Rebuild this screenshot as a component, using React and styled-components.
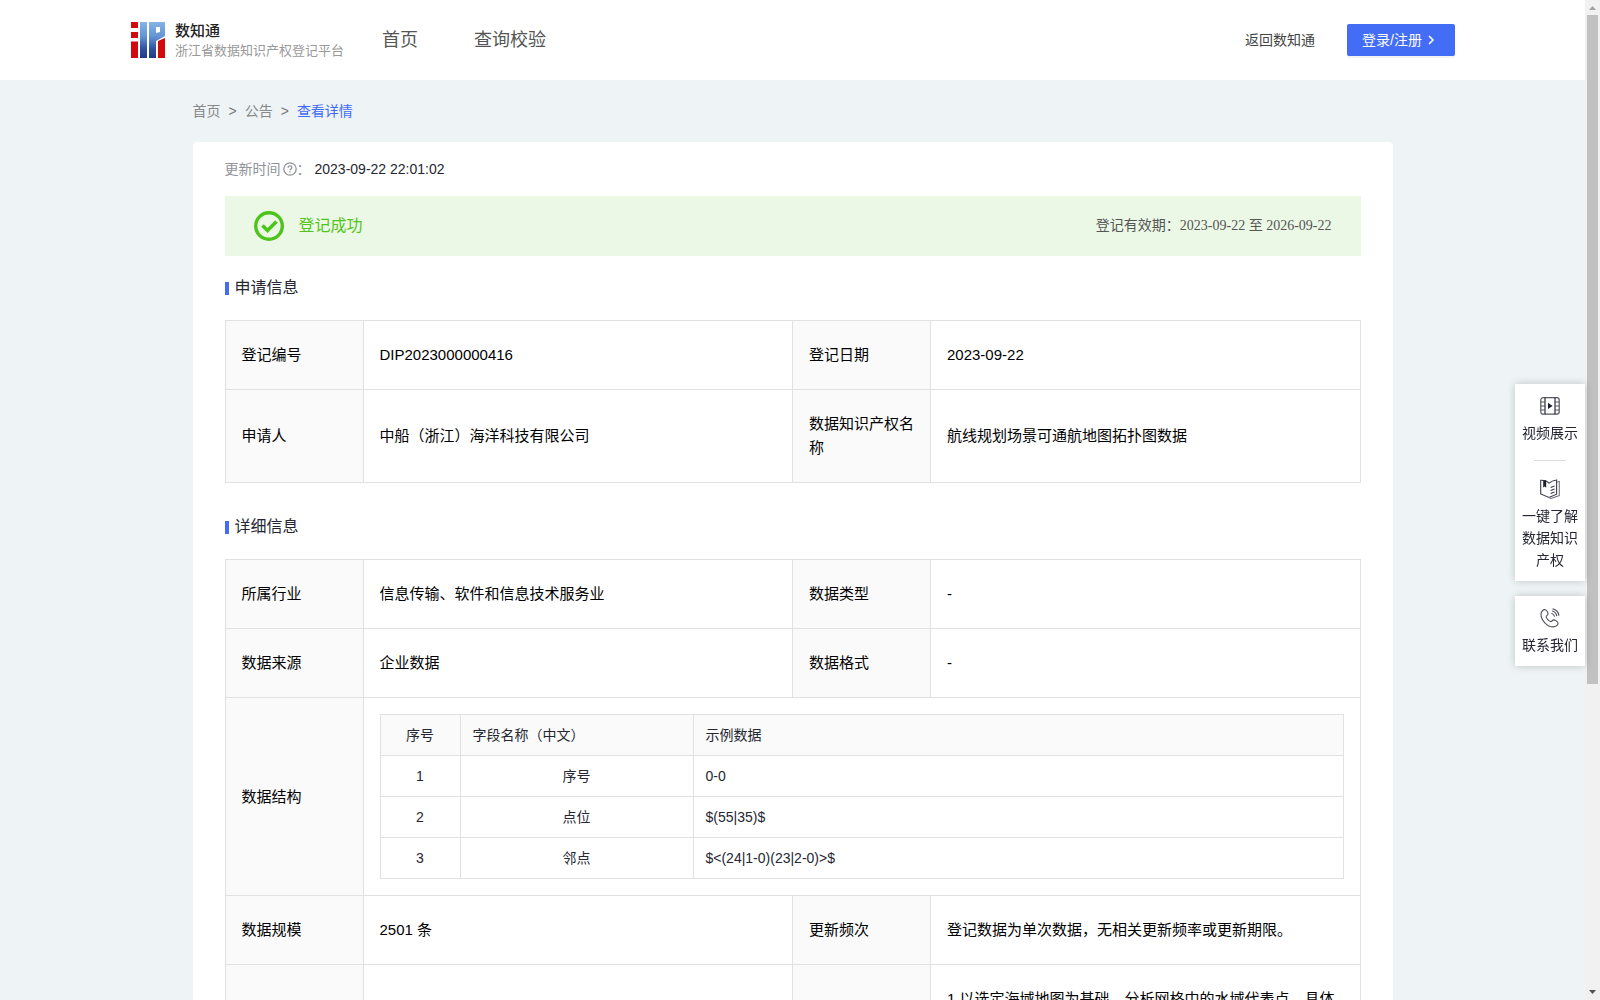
import React from 'react'
import styled, { createGlobalStyle } from 'styled-components'

const applyRows = [
  ['登记编号', 'DIP2023000000416', '登记日期', '2023-09-22'],
  ['申请人', '中船（浙江）海洋科技有限公司', '数据知识产权名称', '航线规划场景可通航地图拓扑图数据'],
]

const detailRows = [
  ['所属行业', '信息传输、软件和信息技术服务业', '数据类型', '-'],
  ['数据来源', '企业数据', '数据格式', '-'],
]

const fields = [
  { name: '序号', sample: '0-0' },
  { name: '点位', sample: '$(55|35)$' },
  { name: '邻点', sample: '$<(24|1-0)(23|2-0)>$' },
]

const LogoMark = () => (
  <svg width="34" height="36" viewBox="0 0 34 36" aria-hidden="true">
    <defs>
      <linearGradient id="logoBlue" x1="0" y1="0" x2="0" y2="36" gradientUnits="userSpaceOnUse">
        <stop offset="0" stopColor="#86b4e6" />
        <stop offset="0.4" stopColor="#6494d4" />
        <stop offset="0.75" stopColor="#3050a0" />
        <stop offset="1" stopColor="#223a86" />
      </linearGradient>
    </defs>
    <path fill="#d20a10" d="M0 0h7v6H0zM0 10h7v6H0zM0 19.500h7V36H0zM27 19l7-3v20h-7z" />
    <path fill="url(#logoBlue)" d="M9 0h7v36H9z" />
    <path fill="url(#logoBlue)" fillRule="evenodd" d="M18 0h16v14l-9 5v17h-7zM25 5v6l4-1V5z" />
  </svg>
)

const ArrowIcon = () => (
  <svg width="14" height="14" viewBox="0 0 14 14" fill="none" stroke="#fff" strokeWidth="1.6">
    <path d="M3 3l4 4-4 4" />
  </svg>
)

const QuestionIcon = () => (
  <svg width="14" height="14" viewBox="0 0 14 14" fill="none" stroke="#909399" strokeWidth="1.3">
    <circle cx="7" cy="7" r="6.2" />
    <path d="M5.1 5.8c0-1.2.8-1.9 1.9-1.9s1.9.7 1.9 1.7c0 1.3-1.9 1.4-1.9 2.6" />
    <path d="M7 9.2v1.4" />
  </svg>
)

const SuccessIcon = () => (
  <svg width="30" height="30" viewBox="0 0 30 30" fill="none" stroke="#4cc41a">
    <circle cx="15" cy="15" r="13.3" strokeWidth="3.4" />
    <path d="M8.5 14.5l5 5 9-9" strokeWidth="3.6" />
  </svg>
)

const VideoIcon = () => (
  <svg width="20" height="20" viewBox="0 0 20 20" fill="none" stroke="#55565f" strokeWidth="1.2">
    <rect x="0.8" y="1.6" width="18.4" height="16.6" rx="2.4" />
    <path d="M5 1.6v16.6M15 1.6v16.6" stroke="#2b2c36" />
    <path d="M.8 6h4.2M.8 10H5M.8 14H5M15 6h4.2M15 10h4.2M15 14h4.2" />
    <path d="M8 6.8v6.2l4.6-3.1z" fill="#1f202b" stroke="none" />
  </svg>
)

const BookIcon = () => (
  <svg width="20" height="20" viewBox="0 0 20 20" fill="none" stroke="#3c3d47" strokeWidth="1.1">
    <path d="M.7 1.2C4.400 1 7 2 9 4.200 11 2.400 13.600 1.400 16.600 1v14.200L9 18.400.7 15z" />
    <path d="M16.800 3.200l2.500-.8v14.100l-8.300 3-2-1" stroke="#777882" />
    <path d="M3.200 1.200h3v7.600L4.700 7.400 3.200 8.600z" fill="#1f202b" stroke="none" />
    <path d="M10.600 8.400l3.900-1.500M10.600 11.400l3.900-1.500M10.600 14.400l3.900-1.500" />
  </svg>
)

const PhoneIcon = () => (
  <svg width="20" height="20" viewBox="0 0 20 20" fill="none" stroke="#50515b" strokeWidth="1.1">
    <path d="M5.300 1.700C3.300 1.300 1 3.400 1 6.200c0 6 6.200 12.700 12 12.700 3 0 5.200-2 5-3.900-.1-1.400-3.300-3.300-4.400-3.100-1.200.2-1.800 1.900-3.100 1.600C8.700 13 6.400 10.400 6.200 9c-.2-1.200 1.600-1.700 1.800-2.900.2-1.300-1.300-4.100-2.700-4.400z" />
    <path d="M11.400 5.200c1.700.5 2.900 1.800 3.200 3.500M12 3c2.600.6 4.400 2.600 4.800 5.200M12.600.9c3.500.7 5.900 3.300 6.300 6.800" />
  </svg>
)

const InfoRow = ({ cells: [label, value, label2, value2] }) => (
  <tr>
    <LabelCell scope="row">{label}</LabelCell>
    <ValueCell>{value}</ValueCell>
    <LabelCell scope="row">{label2}</LabelCell>
    <ValueCell>{value2}</ValueCell>
  </tr>
)

const InfoColumns = () => (
  <colgroup>
    <LabelCol />
    <col />
    <LabelCol />
    <col />
  </colgroup>
)

const App = () => (
  <Shell>
    <GlobalStyle />
    <Page>
      <Header>
        <Brand href="#">
          <LogoMark />
          <BrandText>
            <BrandName>数知通</BrandName>
            <BrandSub>浙江省数据知识产权登记平台</BrandSub>
          </BrandText>
        </Brand>
        <Nav>
          <NavLink href="#">首页</NavLink>
          <NavLink href="#">查询校验</NavLink>
        </Nav>
        <BackLink href="#">返回数知通</BackLink>
        <LoginButton type="button">
          登录/注册
          <ArrowIcon />
        </LoginButton>
      </Header>

      <Main>
        <Breadcrumb>
          <Crumb href="#">首页</Crumb>
          <span>&gt;</span>
          <Crumb href="#">公告</Crumb>
          <span>&gt;</span>
          <Crumb href="#" $active>
            查看详情
          </Crumb>
        </Breadcrumb>

        <Card>
          <UpdateTime>
            更新时间
            <QuestionIcon />：<time>2023-09-22 22:01:02</time>
          </UpdateTime>

          <Banner>
            <SuccessIcon />
            <BannerStatus>登记成功</BannerStatus>
            <BannerPeriod>登记有效期：2023-09-22 至 2026-09-22</BannerPeriod>
          </Banner>

          <SectionTitle>申请信息</SectionTitle>
          <InfoTable>
            <InfoColumns />
            <tbody>
              {applyRows.map((row) => (
                <InfoRow key={row[0]} cells={row} />
              ))}
            </tbody>
          </InfoTable>

          <SectionTitle>详细信息</SectionTitle>
          <InfoTable>
            <InfoColumns />
            <tbody>
              {detailRows.map((row) => (
                <InfoRow key={row[0]} cells={row} />
              ))}
              <tr>
                <LabelCell scope="row">数据结构</LabelCell>
                <NestedCell colSpan={3}>
                  <FieldTable>
                    <colgroup>
                      <IndexCol />
                      <NameCol />
                      <col />
                    </colgroup>
                    <thead>
                      <tr>
                        <FieldHead $center>序号</FieldHead>
                        <FieldHead>字段名称（中文）</FieldHead>
                        <FieldHead>示例数据</FieldHead>
                      </tr>
                    </thead>
                    <tbody>
                      {fields.map((field, i) => (
                        <tr key={field.name}>
                          <FieldCell $center>{i + 1}</FieldCell>
                          <FieldCell $center>{field.name}</FieldCell>
                          <FieldCell>{field.sample}</FieldCell>
                        </tr>
                      ))}
                    </tbody>
                  </FieldTable>
                </NestedCell>
              </tr>
              <InfoRow
                cells={['数据规模', '2501 条', '更新频次', '登记数据为单次数据，无相关更新频率或更新期限。']}
              />
              <TallRow>
                <LabelCell />
                <ValueCell />
                <LabelCell />
                <ValueCell>1.以选定海域地图为基础，分析网格中的水域代表点，具体</ValueCell>
              </TallRow>
            </tbody>
          </InfoTable>
        </Card>
      </Main>
    </Page>

    <SideTools>
      <ToolGroup>
        <Tool href="#">
          <VideoIcon />
          视频展示
        </Tool>
        <ToolDivider />
        <Tool href="#">
          <BookIcon />
          一键了解数据知识产权
        </Tool>
      </ToolGroup>
      <ToolGroup>
        <Tool href="#">
          <PhoneIcon />
          联系我们
        </Tool>
      </ToolGroup>
    </SideTools>

    <ScrollTrack aria-hidden="true">
      <svg width="15" height="15" viewBox="0 0 15 15">
        <path d="M4 10h7L7.500 6z" fill="#a3a3a3" />
      </svg>
      <ScrollThumb />
      <ScrollRest />
      <svg width="15" height="15" viewBox="0 0 15 15">
        <path d="M4 5h7L7.500 9z" fill="#505050" />
      </svg>
    </ScrollTrack>
  </Shell>
)

const GlobalStyle = createGlobalStyle`
  * {
    box-sizing: border-box;
  }

  body {
    margin: 0;
    background: #eef3f6;
    color: #252631;
    font-family: 'Liberation Sans', 'Noto Sans CJK SC', sans-serif;
    font-size: 14px;
    line-height: 22px;
  }

  a {
    color: inherit;
    text-decoration: none;
  }

  svg {
    display: block;
    flex: none;
  }
`

const Shell = styled.div`
  display: flex;
  height: 100vh;
  overflow: hidden;
`

const Page = styled.div`
  flex: 1;
  min-width: 0;
`

const Header = styled.header`
  display: flex;
  align-items: center;
  height: 80px;
  padding: 0 130px 0 131px;
  background: #fff;
`

const Brand = styled.a`
  display: flex;
  align-items: center;
  gap: 10px;
`

const BrandText = styled.div`
  display: flex;
  flex-direction: column;
  padding-top: 2px;
  line-height: 20px;
`

const BrandName = styled.strong`
  color: #222;
  font-size: 15px;
  font-weight: 500;
`

const BrandSub = styled.span`
  color: #999;
  font-size: 13px;
`

const Nav = styled.nav`
  display: flex;
  gap: 56px;
  margin-left: 38px;
`

const NavLink = styled.a`
  color: #555;
  font-size: 18px;
`

const BackLink = styled.a`
  margin-left: auto;
  color: #444;
`

const LoginButton = styled.button`
  display: flex;
  align-items: center;
  gap: 4px;
  height: 32px;
  margin-left: 32px;
  padding: 0 15px;
  border: 0;
  border-radius: 2px;
  background: #446df6;
  box-shadow: 0 2px 0 rgba(0, 0, 0, 0.05);
  color: #fff;
  font: inherit;
  cursor: pointer;
`

const Main = styled.main`
  max-width: 1200px;
  margin: 0 auto;
`

const Breadcrumb = styled.nav`
  display: flex;
  align-items: center;
  gap: 8px;
  height: 62px;
  color: #777;
`

const Crumb = styled.a`
  color: ${({ $active }) => ($active ? '#3e6bf6' : '#888')};
`

const Card = styled.section`
  padding: 16px 32px;
  border-radius: 4px;
  background: #fff;
`

const UpdateTime = styled.div`
  display: flex;
  align-items: center;
  margin-bottom: 16px;
  color: #909399;

  svg {
    margin-left: 2px;
  }

  time {
    margin-left: 4px;
    color: #252631;
  }
`

const Banner = styled.div`
  display: flex;
  align-items: center;
  height: 60px;
  padding: 0 29px;
  background: #ebf8e6;
`

const BannerStatus = styled.span`
  margin-left: 15px;
  color: #52c41a;
  font-size: 16px;
`

const BannerPeriod = styled.span`
  margin-left: auto;
  color: #555;
  font-family: 'Liberation Serif', 'Noto Sans CJK SC', serif;
`

const SectionTitle = styled.h2`
  display: flex;
  align-items: center;
  gap: 6px;
  margin: 0;
  padding: 20px 0;
  font-size: 16px;
  font-weight: 400;
  line-height: 24px;

  &::before {
    content: '';
    width: 4px;
    height: 13px;
    background: #446df6;
  }

  table + & {
    padding-top: 32px;
  }
`

const InfoTable = styled.table`
  width: 100%;
  table-layout: fixed;
  border-collapse: collapse;
  color: #000;
  font-size: 15px;
  line-height: 24px;
`

const LabelCol = styled.col`
  width: 138px;
`

const LabelCell = styled.th`
  padding: 22px 16px;
  border: 1px solid #e1e1e1;
  background: #fafafa;
  font-weight: 400;
  text-align: left;
`

const ValueCell = styled.td`
  padding: 22px 16px;
  border: 1px solid #e1e1e1;
`

const TallRow = styled.tr`
  height: 400px;
  vertical-align: top;
`

const NestedCell = styled.td`
  padding: 16px;
  border: 1px solid #e1e1e1;
`

const FieldTable = styled.table`
  width: 100%;
  table-layout: fixed;
  border-collapse: collapse;
  color: #252631;
  font-size: 14px;
`

const IndexCol = styled.col`
  width: 80px;
`

const NameCol = styled.col`
  width: 233px;
`

const FieldCell = styled.td`
  padding: 8px 12px;
  border: 1px solid #e1e1e1;
  text-align: ${({ $center }) => ($center ? 'center' : 'left')};
`

const FieldHead = styled.th`
  padding: 8px 12px;
  border: 1px solid #e1e1e1;
  background: #fafafa;
  font-weight: 400;
  text-align: ${({ $center }) => ($center ? 'center' : 'left')};
`

const SideTools = styled.aside`
  position: fixed;
  top: 384px;
  right: 15px;
  display: flex;
  flex-direction: column;
  gap: 15px;
  width: 70px;
`

const ToolGroup = styled.div`
  display: flex;
  flex-direction: column;
  align-items: center;
  padding: 12px 7px 10px;
  background: #fff;
  box-shadow: 0 0 8px rgba(0, 0, 0, 0.2);
`

const Tool = styled.a`
  display: flex;
  flex-direction: column;
  align-items: center;
  gap: 6px;
  width: 56px;
  text-align: center;
`

const ToolDivider = styled.hr`
  width: 32px;
  height: 1px;
  margin: 16px 0 18px;
  border: 0;
  background: #ddd;
`

const ScrollTrack = styled.div`
  display: flex;
  flex-direction: column;
  width: 15px;
  background: #f1f1f1;
`

const ScrollThumb = styled.div`
  flex: 69;
  margin: 0 2px;
  background: #c1c1c1;
`

const ScrollRest = styled.div`
  flex: 31;
`

export default App
